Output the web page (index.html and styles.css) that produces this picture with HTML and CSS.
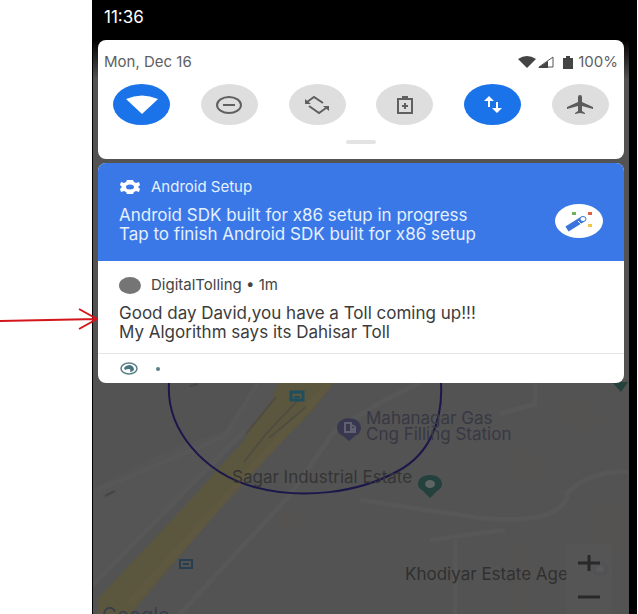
FILE: index.html
```html
<!DOCTYPE html>
<html lang="en">
<head>
<meta charset="utf-8">
<meta name="viewport" content="width=device-width, initial-scale=1">
<title>Notifications</title>
<link rel="stylesheet" href="styles.css">
</head>
<body>
<main class="phone">
  <svg class="map" viewBox="93 0 536 614" preserveAspectRatio="xMidYMin slice" aria-hidden="true">
    <defs>
      <linearGradient id="fade" x1="0" y1="0" x2="0" y2="1">
        <stop offset="0" stop-color="#000"/>
        <stop offset="1" stop-color="#000" stop-opacity="0"/>
      </linearGradient>
    </defs>
    <rect x="93" width="536" height="614" fill="#535353"/>
    <path d="M93 488L165 452L226 430L262 383H300L210 470L93 585Z" fill="#565656" opacity=".6"/>
    <path d="M98 490L225 436L258 383M93 585L245 430M180 614L290 495L335 430L385 400L420 383M360 500L480 518Q560 526 568 494M500 414L535 404V383M565 495Q590 470 629 472M430 540L505 530M455 540V614" fill="none" stroke="#575757" stroke-width="5"/>
    <path d="M278 383H333L313 410L236 489L131 614H97V600L195 495L240 445L272 400Z" fill="#5b573f"/>
    <path d="M330 383L308 407L226 498L130 603" fill="none" stroke="#60593f" stroke-width="8" opacity=".5"/>
    <path d="M276 397L246 434M298 400L266 434L244 462M306 407L269 438" fill="none" stroke="#504d40" stroke-width="2"/>
    <path d="M562 405l25-6 15 27-28 8zM512 450h22v31h-22zM280 511h22v17h-22zM595 505h32v45h-32zM512 545h20v69h-20z" fill="#5b5652" opacity=".4"/>
    <path d="M105 496l10-5M190 386l8-2" stroke="#464646" stroke-width="2"/>
    <path d="M169 383C166 430 204 473 254 487C302 500 358 493 398 471C430 454 443 420 441 383" fill="none" stroke="#1b174b" stroke-width="2"/>
    <g fill="none" stroke="#1d4f61" stroke-width="3">
      <rect x="291" y="392" width="12" height="8"/>
      <path d="M294 397h6" stroke-width="2"/>
    </g>
    <g fill="none" stroke="#263e50" stroke-width="2">
      <rect x="180" y="560" width="12" height="8"/>
      <path d="M183 564h6"/>
    </g>
    <path d="M349 441L343 436Q337 433 337 428C337 415 361 415 361 428Q361 433 355 436Z" fill="#37374f"/>
    <path d="M345 423h6v9h-6zM352 425l3 2v5h-2v-4" fill="none" stroke="#606070" stroke-width="2"/>
    <path d="M430 498L423 491Q418 488 418 484C418 472 442 472 442 484Q442 488 437 491Z" fill="#25413e"/>
    <ellipse cx="430" cy="484" rx="5" ry="4" fill="#5d6665"/>
    <path d="M612 382h16l-7 10z" fill="#25413e"/>
    <ellipse cx="600" cy="569" rx="9" ry="8" fill="#4b4b55"/>
    <ellipse cx="600" cy="569" rx="4" ry="3" fill="#626268"/>
    <g class="map-labels">
      <text x="366" y="424" fill="#383844">Mahanagar Gas</text>
      <text x="366" y="440" fill="#383844">Cng Filling Station</text>
      <text x="232" y="483" fill="#353535">Sagar Industrial Estate</text>
      <text x="405" y="580" fill="#303030">Khodiyar Estate Age</text>
      <text class="map-brand" x="102" y="622" fill="#383f4c">Google</text>
    </g>
    <rect x="93" y="40" width="536" height="40" fill="url(#fade)"/>
  </svg>

  <header class="status-bar"><time>11:36</time></header>

  <section class="quick" aria-label="Quick settings">
    <div class="quick-head">
      <span>Mon, Dec 16</span>
      <span class="indicators">
        <svg width="18" height="12" viewBox="0 0 18 12" aria-hidden="true"><path d="M0 3Q9-3 18 3L9 12Z" fill="#444"/></svg>
        <svg width="16" height="12" viewBox="0 0 16 12" aria-hidden="true"><path d="M1 11L15 1V11Z" fill="none" stroke="#555"/><path d="M0 12L10 5V12Z" fill="#444"/></svg>
        <svg class="battery" width="12" height="13" viewBox="0 0 12 13" aria-hidden="true"><path d="M4 0h4v2h3v11H1V2h3z" fill="#444"/></svg>
        <span>100%</span>
      </span>
    </div>
    <div class="tiles">
      <button class="tile on" aria-label="Wi-Fi"><svg width="32" height="20" viewBox="0 0 32 20"><path d="M0 4Q16-3 32 4L16 19Z" fill="#fff"/></svg></button>
      <button class="tile" aria-label="Do not disturb"><svg width="28" height="20" viewBox="0 0 28 20"><g fill="none" stroke="#606060" stroke-width="2"><ellipse cx="14" cy="10" rx="12" ry="8"/><path d="M8 10h12"/></g></svg></button>
      <button class="tile" aria-label="Auto-rotate"><svg width="28" height="20" viewBox="0 0 28 20"><g fill="none" stroke="#606060" stroke-width="2"><path d="M20 8L11 2L4 7M6 11L16 18L23 13"/></g><path d="M2 4v5h6zM26 16v-5h-6z" fill="#606060"/></svg></button>
      <button class="tile" aria-label="Battery saver"><svg width="18" height="20" viewBox="0 0 18 20"><path d="M2 4h14v14H2zM6 2h6M9 8v6M6 11h6" fill="none" stroke="#606060" stroke-width="2"/></svg></button>
      <button class="tile on" aria-label="Mobile data"><svg width="20" height="20" viewBox="0 0 20 20"><path d="M6 3v9M14 7v9" stroke="#fff" stroke-width="2"/><path d="M1 6l5-5 5 5zM9 13l5 5 5-5z" fill="#fff"/></svg></button>
      <button class="tile" aria-label="Airplane mode"><svg width="28" height="20" viewBox="0 0 28 20"><path d="M14 0q2 0 2 2v5l11 5v2l-11-3v5l3 2v1l-5-1-5 1v-1l3-2v-5L1 14v-2l11-5V2q0-2 2-2z" fill="#5c5c5c"/></svg></button>
    </div>
    <div class="handle"></div>
  </section>

  <section class="notifications" aria-label="Notifications">
    <article class="note setup">
      <div class="note-body">
        <div class="note-head">
          <svg width="22" height="16" viewBox="0 0 22 16" aria-hidden="true"><path fill-rule="evenodd" d="M8 1h6l1 2 2 1 3-1 1 3-2 2 2 2-1 3-3-1-2 1-1 2H8l-1-2-2-1-3 1-1-3 2-2-2-2 1-3 3 1 2-1zM11 5.500a4 2.500 0 1 0 0 5a4 2.500 0 1 0 0-5z" fill="#fff"/></svg>
          <span>Android Setup</span>
        </div>
        <p>Android SDK built for x86 setup in progress<br>Tap to finish Android SDK built for x86 setup</p>
      </div>
      <svg class="wand" width="48" height="35" viewBox="0 0 48 35" aria-hidden="true">
        <ellipse cx="24" cy="17" rx="24" ry="17" fill="#fff"/>
        <path d="M12 25L28 15" stroke="#3b73dc" stroke-width="6"/>
        <path d="M23 17l4 4" stroke="#fff"/>
        <ellipse cx="28" cy="15" rx="3" ry="2.500" fill="#fff" stroke="#3b73dc"/>
        <path d="M17 8h4v3h-4z" fill="#71b05c"/><path d="M33 8h4v3h-4z" fill="#e06043"/><path d="M33 20h4v3h-4z" fill="#f0c64a"/>
      </svg>
    </article>
    <article class="note">
      <div class="note-body">
        <div class="note-head">
          <svg width="22" height="17" viewBox="0 0 22 17" aria-hidden="true"><ellipse cx="11" cy="8.500" rx="11" ry="8.500" fill="#757575"/></svg>
          <span>DigitalTolling • 1m</span>
        </div>
        <p>Good day David,you have a Toll coming up!!!<br>My Algorithm says its Dahisar Toll</p>
      </div>
    </article>
    <footer class="more">
      <svg width="18" height="13" viewBox="0 0 18 13" aria-hidden="true"><ellipse cx="9" cy="6.500" rx="8" ry="5.500" fill="none" stroke="#587f88" stroke-width="1.500"/><path d="M4 6q2-3 6-3 4 1 4 5-2 2-4 2 1-3-1-3-2 0-4 1z" fill="#477580"/></svg>
      <span class="dot"></span>
    </footer>
  </section>

  <div class="zoom">
    <button aria-label="Zoom in"><svg width="22" height="16" viewBox="0 0 22 16"><path d="M0 8h22M11 0v16" stroke="#292929" stroke-width="3"/></svg></button>
    <button aria-label="Zoom out"><svg width="22" height="16" viewBox="0 0 22 16"><path d="M0 8h22" stroke="#292929" stroke-width="3"/></svg></button>
  </div>
</main>
<svg class="pointer" width="98" height="24" viewBox="0 0 98 24" aria-hidden="true"><path d="M0 14L97 12M79 2L97 12L79 22" fill="none" stroke="#d4161c" stroke-width="2"/></svg>
</body>
</html>
```
FILE: styles.css
```css
* {
  box-sizing: border-box;
}

body {
  margin: 0;
  padding: 0 1px 0 92px;
  background: #fff;
  font-family: Inter, Roboto, "Liberation Sans", sans-serif;
  font-size: 15px;
  line-height: 16px;
  color: #444;
}

button {
  display: grid;
  place-items: center;
  margin: 0;
  padding: 0;
  border: 0;
  background: none;
}

svg {
  display: block;
  flex: none;
}

.phone {
  position: relative;
  min-height: 100vh;
  overflow: hidden;
  border-left: 1px solid #000;
  border-right: 8px solid #000;
  background: #535353;
}

.map {
  position: absolute;
  inset: 0;
  width: 100%;
  height: 100%;
}

.map-labels {
  font-size: 17px;
}

.map-brand {
  font-size: 20px;
}

.status-bar {
  position: relative;
  height: 40px;
  padding: 9px 11px;
  background: #000;
  color: #fff;
  font-size: 17px;
}

.quick,
.notifications {
  position: relative;
  margin: 0 5px;
  overflow: hidden;
  border-radius: 8px;
  background: #fff;
}

.quick {
  padding: 14px 6px 15px;
}

.quick-head,
.indicators,
.note-head,
.more {
  display: flex;
  align-items: center;
}

.quick-head {
  justify-content: space-between;
  color: #606060;
}

.indicators {
  gap: 2px;
}

.battery {
  margin: 0 2px 0 6px;
}

.tiles {
  display: flex;
  justify-content: space-between;
  padding: 14px 9px;
}

.tile {
  width: 57px;
  height: 41px;
  border-radius: 50%;
  background: #dedede;
}

.tile.on {
  background: #1a73e8;
}

.handle {
  width: 30px;
  height: 4px;
  margin: 1px auto 0;
  border-radius: 2px;
  background: #e3e3e3;
}

.notifications {
  margin-top: 4px;
}

.note {
  display: flex;
  align-items: center;
  justify-content: space-between;
  padding: 15px 21px 11px;
}

.note-head {
  gap: 10px;
  height: 18px;
}

.note p {
  margin: 10px 0 0;
  font-size: 17px;
  line-height: 19px;
  color: #3c3c3c;
}

.setup,
.setup p {
  color: #e4f0ff;
}

.setup {
  padding-bottom: 17px;
  background: #3b78e7;
}

.wand {
  margin-top: 20px;
}

.more {
  gap: 18px;
  height: 30px;
  padding: 0 22px;
  border-top: 1px solid #e3e6e6;
}

.dot {
  width: 4px;
  height: 4px;
  border-radius: 50%;
  background: #587f88;
}

.zoom {
  position: absolute;
  right: 17px;
  bottom: 0;
  padding-top: 2px;
  background: #575757b0;
}

.zoom button {
  width: 46px;
  height: 34px;
}

.pointer {
  position: absolute;
  top: 307px;
  left: 0;
}
```
